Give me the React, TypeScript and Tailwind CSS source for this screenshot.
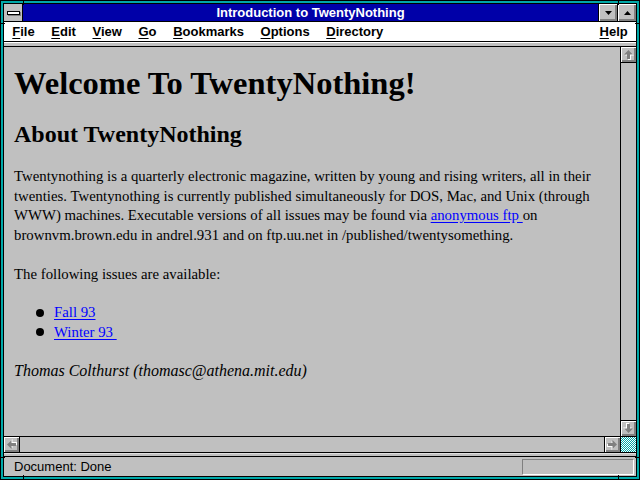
import type { ReactNode } from 'react';

type Dir = 'up' | 'down' | 'left' | 'right';

const rotations: Record<Dir, string> = {
  up: '',
  down: 'rotate-180',
  left: '-rotate-90',
  right: 'rotate-90',
};

// embossed block arrow, like the greyed Win 3.1 scroll arrows
function BlockArrow({ dir }: { dir: Dir }) {
  return (
    <svg width="11" height="11" viewBox="0 0 11 11" className={rotations[dir]}>
      <polygon points="5.5,1 10,5.5 7,5.5 7,10 4,10 4,5.5 1,5.5" fill="#ffffff" transform="translate(1 1)" />
      <polygon points="5.5,1 10,5.5 7,5.5 7,10 4,10 4,5.5 1,5.5" fill="#808080" />
    </svg>
  );
}

function ScrollButton({ dir, className = '' }: { dir: Dir; className?: string }) {
  return (
    <div
      className={`flex h-[15px] w-[15px] shrink-0 items-center justify-center bg-[#c0c0c0] shadow-[inset_1px_1px_0_#ffffff,inset_-2px_-2px_0_#808080] ${className}`}
    >
      <BlockArrow dir={dir} />
    </div>
  );
}

function MenuItem({ hot, rest }: { hot: string; rest: string }) {
  return (
    <span className="px-[8.3px]">
      <span className="underline underline-offset-[2px]">{hot}</span>
      {rest}
    </span>
  );
}

function TitleButton({ children }: { children: ReactNode }) {
  return (
    <div className="flex w-[19px] shrink-0 border-l border-black">
      <div className="flex flex-1 items-center justify-center bg-[#c0c0c0] shadow-[inset_1px_1px_0_#ffffff,inset_-2px_-2px_0_#808080]">
        {children}
      </div>
    </div>
  );
}

function Link({ children }: { children: ReactNode }) {
  return <a className="text-[#0000ff] underline underline-offset-[2px]">{children}</a>;
}

export default function App() {
  return (
    <div className="relative h-[480px] w-[640px] overflow-hidden border border-black">
      <div className="h-full w-full border-2 border-[#00a8a8]">
        <div className="flex h-full w-full flex-col border border-black bg-[#c0c0c0] font-['Liberation_Sans',Arial,sans-serif] text-[13px] text-black">
          {/* title bar */}
          <div className="flex h-[18px] shrink-0 border-b border-black">
            <div className="flex w-[19px] shrink-0 items-center justify-center border-r border-black bg-[#c0c0c0]">
              <div className="h-[4px] w-[13px] border border-black bg-white shadow-[1px_1px_0_#808080]" />
            </div>
            <div className="flex flex-1 items-center justify-center bg-[#0000a8] font-bold leading-none text-white">
              Introduction to TwentyNothing
            </div>
            <TitleButton>
              <svg width="7" height="4" viewBox="0 0 7 4">
                <polygon points="0,0 7,0 3.5,4" fill="#000" />
              </svg>
            </TitleButton>
            <TitleButton>
              <svg width="7" height="4" viewBox="0 0 7 4">
                <polygon points="0,4 7,4 3.5,0" fill="#000" />
              </svg>
            </TitleButton>
          </div>

          {/* menu bar */}
          <div className="flex h-[20px] shrink-0 items-center border-b border-black bg-white font-bold">
            <MenuItem hot="F" rest="ile" />
            <MenuItem hot="E" rest="dit" />
            <MenuItem hot="V" rest="iew" />
            <MenuItem hot="G" rest="o" />
            <MenuItem hot="B" rest="ookmarks" />
            <MenuItem hot="O" rest="ptions" />
            <MenuItem hot="D" rest="irectory" />
            <div className="flex-1" />
            <MenuItem hot="H" rest="elp" />
          </div>

          <div className="h-[5px] shrink-0 border-t border-b border-t-white border-b-black bg-[#c0c0c0]" />

          {/* document + vertical scrollbar */}
          <div className="flex min-h-0 flex-1">
            <div className="min-w-0 flex-1 overflow-hidden border-r border-black px-[10px] pt-[17px] font-['Liberation_Serif','Times_New_Roman',serif] text-[14.8px] leading-[19.5px]">
              <h1 className="text-[32.5px] font-bold leading-[38px]">Welcome To TwentyNothing!</h1>
              <h2 className="mt-[18px] text-[24px] font-bold leading-[28px]">About TwentyNothing</h2>
              <p className="mt-[19px] whitespace-nowrap">
                Twentynothing is a quarterly electronic magazine, written by young and rising writers, all in their
                <br />
                twenties. Twentynothing is currently published simultaneously for DOS, Mac, and Unix (through
                <br />
                WWW) machines. Executable versions of all issues may be found via <Link>anonymous ftp </Link>on
                <br />
                brownvm.brown.edu in andrel.931 and on ftp.uu.net in /published/twentysomething.
              </p>
              <p className="mt-[19.5px]">The following issues are available:</p>
              <ul className="mt-[19px] pl-[22px]">
                {['Fall 93', 'Winter 93\u00a0'].map((issue) => (
                  <li key={issue} className="flex items-center gap-[10px]">
                    <span className="h-[8px] w-[8px] rounded-full bg-black" />
                    <Link>{issue}</Link>
                  </li>
                ))}
              </ul>
              <p className="mt-[19px] text-[16px] italic">Thomas Colthurst (thomasc@athena.mit.edu)</p>
            </div>
            <div className="flex w-[15px] shrink-0 flex-col">
              <ScrollButton dir="up" className="h-[16px] border-b border-black" />
              <div className="flex-1" />
              <ScrollButton dir="down" className="h-[16px] border-t border-black" />
            </div>
          </div>

          {/* horizontal scrollbar */}
          <div className="flex h-[17px] shrink-0 border-t border-b border-black">
            <ScrollButton dir="left" className="w-[16px] border-r border-black" />
            <div className="flex-1" />
            <ScrollButton dir="right" className="w-[16px] border-l border-black" />
            <div className="w-[16px] shrink-0 border-l border-black bg-[repeating-conic-gradient(#00a8a8_0_25%,#ffffff_0_50%)] bg-[length:2px_2px]" />
          </div>

          <div className="h-[4px] shrink-0 border-b border-black bg-[#c0c0c0] shadow-[inset_0_1px_0_#dfdfdf]" />

          {/* status bar */}
          <div className="flex h-[19px] shrink-0 items-center justify-between pl-[10px] pr-[2px]">
            <span className="leading-none">Document: Done</span>
            <div className="mb-[1px] mt-[2px] h-[16px] w-[112px] border border-t-[#808080] border-l-[#808080] border-b-white border-r-white" />
          </div>
        </div>
      </div>

      {/* resize frame corner markers */}
      <div className="absolute left-[22px] top-0 h-[4px] w-px bg-black" />
      <div className="absolute left-[617px] top-0 h-[4px] w-px bg-black" />
      <div className="absolute bottom-0 left-[22px] h-[4px] w-px bg-black" />
      <div className="absolute bottom-0 left-[617px] h-[4px] w-px bg-black" />
      <div className="absolute left-0 top-[22px] h-px w-[4px] bg-black" />
      <div className="absolute right-0 top-[22px] h-px w-[4px] bg-black" />
      <div className="absolute left-0 top-[456px] h-px w-[4px] bg-black" />
      <div className="absolute right-0 top-[456px] h-px w-[4px] bg-black" />
    </div>
  );
}
